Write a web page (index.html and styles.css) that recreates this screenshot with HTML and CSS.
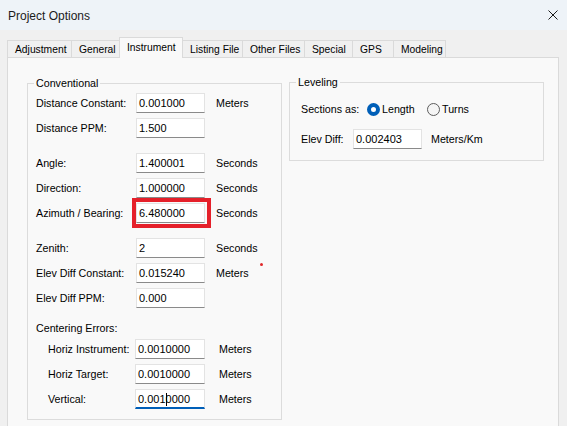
FILE: index.html
```html
<!DOCTYPE html>
<html>
<head>
<meta charset="utf-8">
<title>Project Options</title>
<link rel="stylesheet" href="styles.css">
</head>
<body>
<div class="window">
  <div class="titlebar">
    <span class="title">Project Options</span>
    <svg class="close" viewBox="0 0 10 10" width="10" height="10"><path d="M0.5 0.5 L9.5 9.5 M9.5 0.5 L0.5 9.5" stroke="#1a1a1a" stroke-width="1" fill="none"/></svg>
  </div>
  <div class="tabs">
    <div class="tab">Adjustment</div>
    <div class="tab">General</div>
    <div class="tab active">Instrument</div>
    <div class="tab">Listing File</div>
    <div class="tab">Other Files</div>
    <div class="tab">Special</div>
    <div class="tab">GPS</div>
    <div class="tab last">Modeling</div>
  </div>
  <div class="panel">
    <fieldset class="group conventional">
      <legend>Conventional</legend>
      <div class="block">
        <div class="row"><span class="lbl">Distance Constant:</span><span class="field">0.001000</span><span class="unit">Meters</span></div>
        <div class="row"><span class="lbl">Distance PPM:</span><span class="field">1.500</span><span class="unit"></span></div>
      </div>
      <div class="block">
        <div class="row"><span class="lbl">Angle:</span><span class="field">1.400001</span><span class="unit">Seconds</span></div>
        <div class="row"><span class="lbl">Direction:</span><span class="field">1.000000</span><span class="unit">Seconds</span></div>
        <div class="row"><span class="lbl">Azimuth / Bearing:</span><span class="field marked">6.480000<span class="highlight"></span></span><span class="unit">Seconds</span></div>
      </div>
      <div class="block">
        <div class="row"><span class="lbl">Zenith:</span><span class="field">2</span><span class="unit">Seconds</span></div>
        <div class="row dotted"><span class="lbl">Elev Diff Constant:</span><span class="field">0.015240</span><span class="unit">Meters</span><span class="reddot"></span></div>
        <div class="row"><span class="lbl">Elev Diff PPM:</span><span class="field">0.000</span><span class="unit"></span></div>
      </div>
      <div class="centering-title">Centering Errors:</div>
      <div class="block centering">
        <div class="row"><span class="lbl">Horiz Instrument:</span><span class="field">0.0010000</span><span class="unit">Meters</span></div>
        <div class="row"><span class="lbl">Horiz Target:</span><span class="field">0.0010000</span><span class="unit">Meters</span></div>
        <div class="row"><span class="lbl">Vertical:</span><span class="field focused">0.001<span class="caret"></span>0000</span><span class="unit">Meters</span></div>
      </div>
    </fieldset>
    <fieldset class="group leveling">
      <legend>Leveling</legend>
      <div class="lev-row">
        <span class="lev-lbl">Sections as:</span>
        <span class="opt opt-first"><span class="radio checked"></span>Length</span>
        <span class="opt"><span class="radio"></span>Turns</span>
      </div>
      <div class="lev-row lev-elev">
        <span class="lev-lbl2">Elev Diff:</span>
        <span class="field">0.002403</span>
        <span class="unit">Meters/Km</span>
      </div>
    </fieldset>
  </div>
</div>
</body>
</html>
```
FILE: styles.css
```css
html, body {
  margin: 0;
  padding: 0;
}
body {
  width: 567px;
  height: 426px;
  overflow: hidden;
  background: #f0f0f0;
  font-family: "Liberation Sans", Arial, sans-serif;
  font-size: 10.7px;
  color: #000;
}
.window {
  width: 567px;
  height: 426px;
  overflow: hidden;
}
.titlebar {
  height: 30px;
  background: #eef3f8;
  display: flex;
  align-items: center;
  justify-content: space-between;
  padding: 0 9px 0 8px;
  box-sizing: border-box;
}
.title {
  font-size: 12px;
  color: #1b1b1b;
  margin-top: 1px;
}
.close {
  display: block;
}
.tabs {
  display: grid;
  grid-template-columns: 64px 48px 64px 59px 62px 48px 41px 53px;
  align-items: end;
  height: 20px;
  margin: 7px 0 0 7px;
  position: relative;
  z-index: 2;
  font-size: 10.3px;
}
.tab {
  height: 17px;
  box-sizing: border-box;
  border-top: 1px solid #dadada;
  border-left: 1px solid #dadada;
  background: #f0f0f0;
  padding-left: 7px;
  display: flex;
  align-items: center;
  white-space: nowrap;
  color: #000;
}
.tab.last {
  border-right: 1px solid #dadada;
}
.tab.active {
  height: 21px;
  margin-bottom: -1px;
  background: #f9f9f9;
  border-right: 1px solid #dadada;
  padding-left: 7px;
  padding-bottom: 2px;
}
.tab.active + .tab {
  border-left: 0;
}
.panel {
  position: relative;
  z-index: 1;
  margin-left: 7px;
  width: 552px;
  height: 390px;
  box-sizing: border-box;
  border: 1px solid #dadada;
  background: #f9f9f9;
  display: flex;
  align-items: flex-start;
  padding: 19px 0 0 19px;
}
.group {
  margin: 0;
  border: 1px solid #dcdcdc;
  box-sizing: border-box;
  width: 255px;
}
.group legend {
  padding: 0 2px;
  line-height: 13px;
}
.conventional {
  height: 343px;
  padding: 3px 0 0 8px;
}
.conventional legend {
  margin-left: -2px;
}
.block {
  display: flex;
  flex-direction: column;
  gap: 5px;
  margin-bottom: 15px;
}
.row {
  display: grid;
  grid-template-columns: 100px 69px auto;
  align-items: center;
  height: 20px;
  position: relative;
}
.row .unit {
  margin-left: 11px;
}
.lbl {
  white-space: nowrap;
}
.field {
  height: 20px;
  box-sizing: border-box;
  background: #fff;
  border: 1px solid #e3e3e3;
  border-bottom-color: #8a8a8a;
  padding-left: 2px;
  display: flex;
  align-items: center;
  white-space: nowrap;
  position: relative;
  font-size: 11px;
}
.field.focused {
  border-bottom: 2px solid #005fb8;
  padding-top: 1px;
}
.caret {
  display: inline-block;
  width: 1px;
  height: 13px;
  background: #000;
  margin-right: -1px;
}
.highlight {
  position: absolute;
  left: -5px;
  top: -6px;
  right: -7px;
  bottom: -6px;
  border: 4px solid #e5202a;
}
.reddot {
  position: absolute;
  left: 224px;
  top: 0;
  width: 3px;
  height: 3px;
  border-radius: 50%;
  background: #e0282a;
}
.centering-title {
  margin: -1px 0 4px 0;
  line-height: 13px;
}
.centering {
  margin-bottom: 0;
}
.centering .row {
  grid-template-columns: 87px 70px auto;
  padding-left: 12px;
}
.centering .row .unit {
  margin-left: 14px;
}
.leveling {
  margin-left: 7px;
  margin-top: -1px;
  height: 85px;
  padding: 10px 0 0 11px;
}
.leveling legend {
  margin-left: -5px;
}
.lev-row {
  display: flex;
  align-items: center;
  height: 20px;
}
.lev-lbl {
  width: 66px;
}
.opt {
  display: flex;
  align-items: center;
  gap: 2px;
}
.opt-first {
  width: 60px;
}
.radio {
  width: 13px;
  height: 13px;
  box-sizing: border-box;
  border-radius: 50%;
  border: 1px solid #5c5c5c;
  background: #f5f5f5;
  display: inline-block;
}
.radio.checked {
  border: 4px solid #005fb8;
  background: #fff;
}
.lev-elev {
  margin-top: 10px;
}
.lev-lbl2 {
  width: 52px;
}
.lev-elev .field {
  width: 69px;
}
.lev-elev .unit {
  margin-left: 9px;
}
```
